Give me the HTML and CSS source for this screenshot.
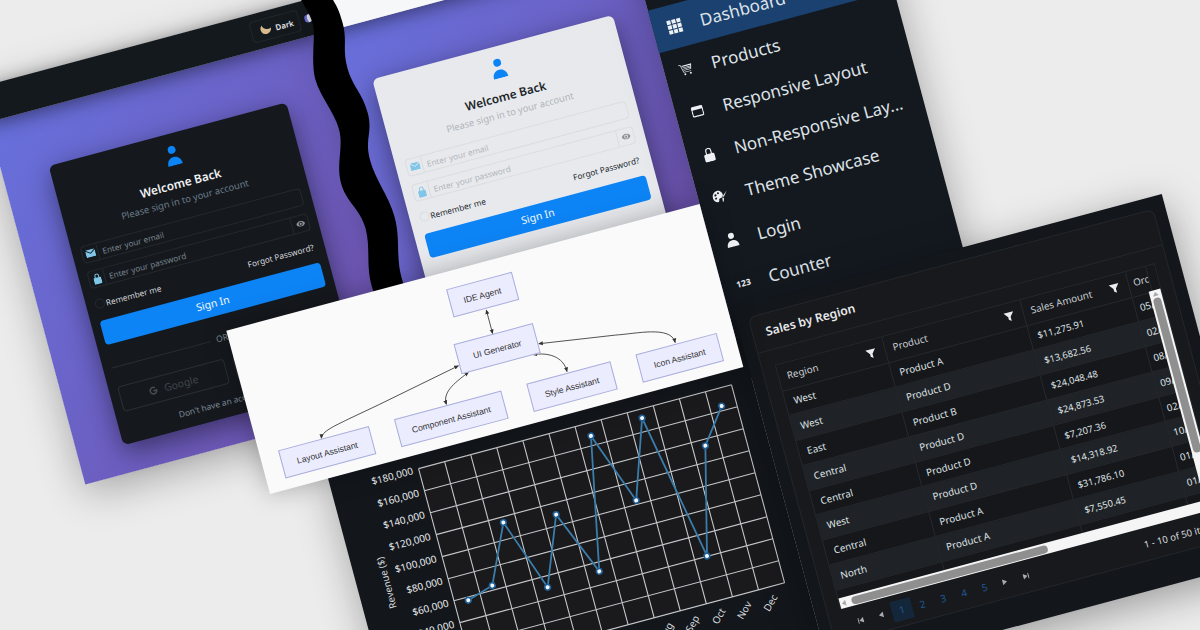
FILE: index.html
```html
<!DOCTYPE html>
<html lang="en">
<head>
    <meta charset="UTF-8">
    <title>UI Generator Collage</title>
    <link rel="stylesheet" href="styles.css">
</head>
<body>
<div class="stage">

    <!-- login, dark half -->
    <section class="win win-dark">
        <header class="win-head">
            <button class="theme-btn">
                <svg class="moon" viewBox="0 0 16 16"><path d="M6 1a7 7 0 1 0 9 9A8 8 0 0 1 6 1z"/></svg>
                <span>Dark</span>
            </button>
            <svg class="mini-logo" viewBox="0 0 10 16"><circle cx="5" cy="8" r="5"/><path class="mini-cut" d="M5 3a5 5 0 0 1 0 10c-2-3-2-7 0-10z"/></svg>
        </header>
        <main class="win-main">
            <form class="login">
                <svg class="login-icon" viewBox="0 0 16 20"><circle cx="8" cy="4.2" r="3.9"/><path d="M.6 20c0-5.500 3.200-8.500 7.400-8.500s7.400 3 7.400 8.500z"/></svg>
                <h2>Welcome Back</h2>
                <p class="sub">Please sign in to your account</p>
                <div class="field">
                    <span class="addon"><svg viewBox="0 0 16 12"><path d="M0 1.500V11a1 1 0 0 0 1 1h14a1 1 0 0 0 1-1V1.500L8 7z"/><path d="M.5 0h15L8 5.500z"/></svg></span>
                    <span class="ph">Enter your email</span>
                </div>
                <div class="field">
                    <span class="addon"><svg class="lock" viewBox="0 0 12 16"><path d="M6 0a3.500 3.500 0 0 0-3.500 3.500V6H1.500A1.500 1.500 0 0 0 0 7.500v7A1.500 1.500 0 0 0 1.500 16h9a1.500 1.500 0 0 0 1.500-1.500v-7A1.500 1.500 0 0 0 10.500 6H9.500V3.500A3.500 3.500 0 0 0 6 0zm0 1.500a2 2 0 0 1 2 2V6H4V3.500a2 2 0 0 1 2-2z"/></svg></span>
                    <span class="ph">Enter your password</span>
                    <span class="eye"><svg viewBox="0 0 16 10"><path d="M8 0C4.500 0 1.500 2.200 0 5c1.500 2.800 4.500 5 8 5s6.500-2.200 8-5c-1.500-2.800-4.500-5-8-5zm0 8.500a3.500 3.500 0 1 1 0-7 3.500 3.500 0 0 1 0 7zM8 3a2 2 0 1 0 0 4 2 2 0 0 0 0-4z"/></svg></span>
                </div>
                <div class="opts">
                    <label><span class="check"></span>Remember me</label>
                    <a>Forgot Password?</a>
                </div>
                <div class="submit">Sign In</div>
                <div class="or"><span>OR</span></div>
                <div class="socials">
                    <div class="social"><svg viewBox="0 0 16 16"><path d="M14.500 7H8.200v2.600h3.600A3.900 3.900 0 1 1 10.600 5l1.800-1.900A6.500 6.500 0 1 0 14.700 8c0-.4 0-.7-.2-1z"/></svg>Google</div>
                    <div class="social"></div>
                </div>
                <p class="foot">Don't have an account? Sign up</p>
            </form>
        </main>
    </section>

    <!-- login, light half -->
    <section class="win win-light">
        <header class="win-head"></header>
        <main class="win-main">
            <form class="login">
                <svg class="login-icon" viewBox="0 0 16 20"><circle cx="8" cy="4.2" r="3.9"/><path d="M.6 20c0-5.500 3.200-8.500 7.400-8.500s7.400 3 7.400 8.500z"/></svg>
                <h2>Welcome Back</h2>
                <p class="sub">Please sign in to your account</p>
                <div class="field">
                    <span class="addon"><svg viewBox="0 0 16 12"><path d="M0 1.500V11a1 1 0 0 0 1 1h14a1 1 0 0 0 1-1V1.500L8 7z"/><path d="M.5 0h15L8 5.500z"/></svg></span>
                    <span class="ph">Enter your email</span>
                </div>
                <div class="field">
                    <span class="addon"><svg class="lock" viewBox="0 0 12 16"><path d="M6 0a3.500 3.500 0 0 0-3.500 3.500V6H1.500A1.500 1.500 0 0 0 0 7.500v7A1.500 1.500 0 0 0 1.500 16h9a1.500 1.500 0 0 0 1.500-1.500v-7A1.500 1.500 0 0 0 10.500 6H9.500V3.500A3.500 3.500 0 0 0 6 0zm0 1.500a2 2 0 0 1 2 2V6H4V3.500a2 2 0 0 1 2-2z"/></svg></span>
                    <span class="ph">Enter your password</span>
                    <span class="eye"><svg viewBox="0 0 16 10"><path d="M8 0C4.500 0 1.500 2.200 0 5c1.500 2.800 4.500 5 8 5s6.500-2.200 8-5c-1.500-2.800-4.500-5-8-5zm0 8.500a3.500 3.500 0 1 1 0-7 3.500 3.500 0 0 1 0 7zM8 3a2 2 0 1 0 0 4 2 2 0 0 0 0-4z"/></svg></span>
                </div>
                <div class="opts">
                    <label><span class="check"></span>Remember me</label>
                    <a>Forgot Password?</a>
                </div>
                <div class="submit">Sign In</div>
            </form>
        </main>
    </section>

    <!-- the torn edge between the two login halves -->
    <svg class="wave" viewBox="270 60 70 430">
        <path d="M291 60 L291 79 C294 90 296 95 296 105 S284 140 284 158 S294 195 294 213 S282 245 282 265 S294 295 294 315 S285 350 285 372 S294 405 294 425 S285 460 285 490 L316 490 C316 470 325 450 325 425 S316 395 316 372 S325 335 325 312 S316 272 316 250 S326 225 326 204 S318 175 318 155 S325 130 325 111 S322 90 320 79 L320 60 Z"/>
    </svg>

    <!-- nav menu -->
    <nav class="sidebar">
        <a class="nav-item active">
            <svg viewBox="0 0 16 16"><path d="M1 1h4v4H1zM6 1h4v4H6zM11 1h4v4h-4zM1 6h4v4H1zM6 6h4v4H6zM11 6h4v4h-4zM1 11h4v4H1zM6 11h4v4H6zM11 11h4v4h-4z"/></svg>
            <span>Dashboard</span>
        </a>
        <a class="nav-item">
            <svg class="ic-thin" viewBox="0 0 16 16"><path d="M0 2h2.500l2.200 9h8.300v.8H4L1.900 2.800H0zM3.500 3.500H15l-1.500 6H5l-.2-.7h8.100l.2-.8H4.600l-.2-.8h8.900l.2-.8H4.200l-.2-.8h9.500l.2-.8H3.700z"/><circle cx="5.500" cy="13.800" r="1.100"/><circle cx="12" cy="13.800" r="1.100"/></svg>
            <span>Products</span>
        </a>
        <a class="nav-item">
            <svg class="ic-small" viewBox="0 0 16 16"><path d="M2 1h12a2 2 0 0 1 2 2v10a2 2 0 0 1-2 2H2a2 2 0 0 1-2-2V3a2 2 0 0 1 2-2zm-.4 4.600V13c0 .2.200.4.400.4h12c.2 0 .4-.2.400-.4V5.600z"/></svg>
            <span>Responsive Layout</span>
        </a>
        <a class="nav-item">
            <svg class="ic-thin" viewBox="0 0 16 16"><path d="M8 0a3.500 3.500 0 0 0-3.500 3.500V7h-1A1.500 1.500 0 0 0 2 8.500v6A1.500 1.500 0 0 0 3.500 16h9a1.500 1.500 0 0 0 1.500-1.500v-6A1.500 1.500 0 0 0 12.500 7h-1V3.500A3.500 3.500 0 0 0 8 0zm0 1.300a2.200 2.200 0 0 1 2.200 2.200V7H5.800V3.500A2.200 2.200 0 0 1 8 1.300z"/></svg>
            <span>Non-Responsive Lay...</span>
        </a>
        <a class="nav-item">
            <svg viewBox="0 0 16 16"><path d="M6.500 1C3 1 .3 3.600.3 7c0 3 2.500 5.500 4.500 5.200 1.400-.2.900-1.600 1.300-2.500.5-1 1.800-.6 2.900-1.100 2-1 2.300-3 1.200-4.900C9.300 2 8 1 6.500 1zM3.500 6a1.100 1.100 0 1 1 0-2.200 1.100 1.100 0 0 1 0 2.200zm3-1.600a1 1 0 1 1 0-2 1 1 0 0 1 0 2zm-3.200 4.800a1 1 0 1 1 0-2 1 1 0 0 1 0 2zM15.500 3l-4.200 5.500-1.100-.8zM9.700 8.500l1.300 1c-.1 1.500-.8 3.300-2 4 .3-1 0-1.800.3-3z"/></svg>
            <span>Theme Showcase</span>
        </a>
        <a class="nav-item">
            <svg viewBox="0 0 16 16"><circle cx="8" cy="4" r="3"/><path d="M2 15c0-4 2.500-6.500 6-6.500s6 2.500 6 6.500z"/></svg>
            <span>Login</span>
        </a>
        <a class="nav-item">
            <b class="num-icon">123</b>
            <span>Counter</span>
        </a>
    </nav>

    <!-- revenue chart -->
    <section class="chart-win">
        <svg class="chart" viewBox="0 0 435 300">
            <rect class="plot" x="90" y="41" width="324" height="205"/>
            <path class="grid-lines" d="M90 41h324M90 63.800h324M90 86.600h324M90 109.300h324M90 132.100h324M90 154.900h324M90 177.700h324M90 200.400h324M90 223.200h324M90 246h324M90 41v205M117 41v205M144 41v205M171 41v205M198 41v205M225 41v205M252 41v205M279 41v205M306 41v205M333 41v205M360 41v205M387 41v205M414 41v205"/>
            <polyline class="line" points="104,181 131,173 158,115 184,189 211,121 238,187 265,54 292,128 319,50 346,200 373,93 399,59"/>
            <g class="dots">
                <circle cx="104" cy="181" r="2.800"/><circle cx="131" cy="173" r="2.800"/><circle cx="158" cy="115" r="2.800"/><circle cx="184" cy="189" r="2.800"/><circle cx="211" cy="121" r="2.800"/><circle cx="238" cy="187" r="2.800"/><circle cx="265" cy="54" r="2.800"/><circle cx="292" cy="128" r="2.800"/><circle cx="319" cy="50" r="2.800"/><circle cx="346" cy="200" r="2.800"/><circle cx="373" cy="93" r="2.800"/><circle cx="399" cy="59" r="2.800"/>
            </g>
            <g class="y-labels">
                <text x="84" y="45">$180,000</text><text x="84" y="68">$160,000</text><text x="84" y="90.500">$140,000</text><text x="84" y="113">$120,000</text><text x="84" y="136">$100,000</text><text x="84" y="159">$80,000</text><text x="84" y="182">$60,000</text><text x="84" y="204">$40,000</text>
            </g>
            <text class="y-title" transform="translate(33 143) rotate(-90)">Revenue ($)</text>
            <g class="x-labels">
                <text transform="translate(296 258) rotate(-45)">Aug</text><text transform="translate(323 258) rotate(-45)">Sep</text><text transform="translate(350 258) rotate(-45)">Oct</text><text transform="translate(377 258) rotate(-45)">Nov</text><text transform="translate(404 258) rotate(-45)">Dec</text>
            </g>
        </svg>
    </section>

    <!-- sales data grid -->
    <section class="table-win">
        <div class="card">
            <h3 class="card-title">Sales by Region</h3>
            <div class="grid">
                <div class="grid-body">
                    <table>
                        <colgroup><col class="c-region"><col class="c-product"><col class="c-sales"><col class="c-order"><col class="c-fill"></colgroup>
                        <thead>
                            <tr>
                                <th><div class="th-in">Region<svg viewBox="0 0 12 12"><path d="M0 1h12L7.500 6.500V12L4.500 9.500v-3z"/></svg></div></th>
                                <th><div class="th-in">Product<svg viewBox="0 0 12 12"><path d="M0 1h12L7.500 6.500V12L4.500 9.500v-3z"/></svg></div></th>
                                <th><div class="th-in">Sales Amount<svg viewBox="0 0 12 12"><path d="M0 1h12L7.500 6.500V12L4.500 9.500v-3z"/></svg></div></th>
                                <th class="th-order">Orc</th>
                                <th></th>
                            </tr>
                        </thead>
                        <tbody>
                            <tr><td>West</td><td>Product A</td><td>$11,275.91</td><td colspan="2">05/</td></tr>
                            <tr><td>West</td><td>Product D</td><td>$13,682.56</td><td colspan="2">02/</td></tr>
                            <tr><td>East</td><td>Product B</td><td>$24,048.48</td><td colspan="2">08/</td></tr>
                            <tr><td>Central</td><td>Product D</td><td>$24,873.53</td><td colspan="2">09/</td></tr>
                            <tr><td>Central</td><td>Product D</td><td>$7,207.36</td><td colspan="2">02/</td></tr>
                            <tr><td>West</td><td>Product D</td><td>$14,318.92</td><td colspan="2">10/</td></tr>
                            <tr><td>Central</td><td>Product A</td><td>$31,786.10</td><td colspan="2">01/</td></tr>
                            <tr><td>North</td><td>Product A</td><td>$7,550.45</td><td colspan="2">01/</td></tr>
                            <tr><td></td><td></td><td></td><td colspan="2"></td></tr>
                        </tbody>
                    </table>
                </div>
                <div class="vbar"><i class="arrow-up"></i><i class="vthumb"></i></div>
                <div class="hbar"><i class="arrow-left"></i><i class="hthumb"></i></div>
            </div>
            <div class="pager">
                <a><svg viewBox="0 0 8 8"><path d="M0 0h1.500v8H0zM8 0v8L2 4z"/></svg></a>
                <a><svg viewBox="0 0 8 8"><path d="M7 0v8L1 4z"/></svg></a>
                <a class="page on">1</a>
                <a class="page">2</a>
                <a class="page">3</a>
                <a class="page">4</a>
                <a class="page">5</a>
                <a><svg viewBox="0 0 8 8"><path d="M1 0v8l6-4z"/></svg></a>
                <a><svg viewBox="0 0 8 8"><path d="M0 0v8l6-4zM6.500 0H8v8H6.500z"/></svg></a>
                <span class="pager-info">1 - 10 of 50 items</span>
            </div>
        </div>
    </section>

    <!-- agent diagram -->
    <section class="diagram">
        <svg class="edges" viewBox="0 0 490 169">
            <defs>
                <marker id="tip" markerWidth="6" markerHeight="6" refX="5" refY="3" orient="auto-start-reverse"><path d="M0 0.500L6 3L0 5.500z"/></marker>
            </defs>
            <path d="M256.500 47.500L256.500 71.500"/>
            <path d="M215 94L128 111L95 117C80 120 66 122 64 128.500"/>
            <path d="M223 103C205 110 193 116 193.500 128"/>
            <path d="M290 102.500C305 104 319 112 318.500 127.500"/>
            <path d="M298.500 93.500L375 105C395 109 431 110 430.500 127.500"/>
        </svg>
        <div class="node n-ide">IDE Agent</div>
        <div class="node n-ui">UI Generator</div>
        <div class="node n-layout">Layout Assistant</div>
        <div class="node n-comp">Component Assistant</div>
        <div class="node n-style">Style Assistant</div>
        <div class="node n-icon">Icon Assistant</div>
    </section>
</div>
</body>
</html>
```

FILE: styles.css
```css
* {
    box-sizing: border-box;
}
html, body {
    margin: 0;
    padding: 0;
    width: 1200px;
    height: 630px;
    overflow: hidden;
    background: #ececed;
    font-family: "Noto Sans", "Open Sans", sans-serif;
}
.stage {
    position: absolute;
    left: 0;
    top: 0;
    width: 0;
    height: 0;
    transform: rotate(-15deg);
    transform-origin: 0 0;
}

/* login windows */
.win {
    position: absolute;
    top: 79px;
    height: 411px;
    display: flex;
    flex-direction: column;
    box-shadow: 0 10px 40px rgba(0, 0, 0, .3);
}
.win-dark {
    left: -43px;
    width: 340px;
    --head: #14191e;
    --card: #15191e;
    --title: #eef0f2;
    --sub: #6c7b89;
    --line: #24292e;
    --ph: #79848f;
    --label: #d5d8dc;
}
.win-light {
    left: 304px;
    width: 319px;
    --head: #f6f7f9;
    --card: #e7e9ed;
    --title: #212529;
    --sub: #b1b4b9;
    --line: #dcdde0;
    --ph: #b2b5ba;
    --label: #212529;
}
.win-head {
    height: 36px;
    flex: none;
    display: flex;
    align-items: center;
    justify-content: flex-end;
    background: var(--head);
    box-shadow: 0 4px 18px rgba(0, 0, 0, .45);
    position: relative;
}
.theme-btn {
    width: 50px;
    height: 22px;
    margin-right: 5px;
    display: flex;
    align-items: center;
    gap: 4px;
    padding: 0 0 0 8px;
    border: 1px solid #22272c;
    border-radius: 4px;
    background: transparent;
    color: #e4e6e9;
    font: 600 8px "Noto Sans", sans-serif;
}
.moon {
    width: 12px;
    height: 12px;
    flex: none;
    fill: #d9ba8d;
    transform: rotate(-20deg);
}
.mini-logo {
    width: 8px;
    height: 13px;
    flex: none;
    fill: #6b6fd8;
}
.mini-cut {
    fill: #e8e8f0;
}
.win-main {
    flex: 1;
    padding-top: 58px;
    background: linear-gradient(135deg, #6770dc 0%, #7050aa 100%);
}
.login {
    width: 246px;
    height: 289px;
    margin: 0 auto;
    padding: 12px 9px 0;
    border-radius: 6px;
    background: var(--card);
    box-shadow: 0 8px 26px rgba(0, 0, 0, .45);
    display: flex;
    flex-direction: column;
}
.win-light .login {
    width: 249px;
    padding: 12px 10px 0;
}
.login-icon {
    width: 16px;
    height: 20px;
    flex: none;
    align-self: center;
    fill: #0d84f5;
}
.login h2 {
    margin: 10px 0 0;
    height: 16px;
    line-height: 16px;
    text-align: center;
    font-size: 11.8px;
    font-weight: 600;
    color: var(--title);
}
.sub {
    margin: 3px 0 11px;
    height: 14px;
    line-height: 14px;
    text-align: center;
    font-size: 9.4px;
    color: var(--sub);
}
.field {
    height: 18px;
    flex: none;
    margin-bottom: 8px;
    display: flex;
    align-items: center;
    border: 1px solid var(--line);
    border-radius: 4px;
    font-size: 8.2px;
}
.addon {
    width: 16px;
    height: 100%;
    flex: none;
    display: flex;
    align-items: center;
    justify-content: center;
    border-right: 1px solid var(--line);
}
.addon svg {
    width: 10px;
    height: 8px;
    fill: #7fc6e8;
}
.addon svg.lock {
    width: 8px;
    height: 11px;
}
.ph {
    flex: 1;
    padding-left: 4px;
    color: var(--ph);
}
.eye {
    width: 17px;
    height: 100%;
    display: flex;
    align-items: center;
    justify-content: center;
    border-left: 1px solid var(--line);
}
.eye svg {
    width: 9px;
    height: 6px;
    fill: #8d9196;
}
.opts {
    height: 14px;
    flex: none;
    margin-top: 1px;
    padding-right: 2px;
    display: flex;
    align-items: center;
    justify-content: space-between;
    font-size: 8.2px;
    color: var(--label);
}
.opts label {
    display: flex;
    align-items: center;
    gap: 1px;
}
.check {
    width: 10px;
    height: 10px;
    border: 1px solid var(--line);
    border-radius: 50%;
}
.submit {
    height: 25px;
    flex: none;
    margin-top: 10px;
    border-radius: 4px;
    background: #0d84f5;
    color: #f4f9ff;
    font-size: 10.5px;
    line-height: 25px;
    text-align: center;
}
.or {
    height: 12px;
    flex: none;
    margin-top: 17px;
    display: flex;
    align-items: center;
    gap: 6px;
    font-size: 8.6px;
    color: #7b8792;
}
.or::before, .or::after {
    content: "";
    flex: 1;
    height: 1px;
    background: #2a2f34;
}
.socials {
    height: 26px;
    flex: none;
    margin-top: 14px;
    display: flex;
    gap: 9px;
}
.social {
    flex: 1;
    display: flex;
    align-items: center;
    justify-content: center;
    gap: 6px;
    border: 1px solid #2a2f34;
    border-radius: 4px;
    color: #3f454b;
    font-size: 10.4px;
}
.social svg {
    width: 10px;
    height: 10px;
    fill: #474c52;
}
.foot {
    margin: 10px 0 0;
    text-align: center;
    font-size: 8.4px;
    line-height: 14px;
    color: #7f8c98;
}
.wave {
    position: absolute;
    left: 270px;
    top: 60px;
    width: 70px;
    height: 430px;
    fill: #000;
}

/* nav menu */
.sidebar {
    position: absolute;
    left: 623px;
    top: 100px;
    width: 243px;
    height: 460px;
    padding-top: 78px;
    background: #141920;
    box-shadow: 0 10px 40px rgba(0, 0, 0, .3);
    display: flex;
    flex-direction: column;
}
.nav-item {
    height: 44.2px;
    flex: none;
    display: flex;
    align-items: center;
    gap: 18px;
    padding-left: 14px;
    font-size: 17px;
    color: #dfe3e8;
    white-space: nowrap;
}
.nav-item svg {
    width: 16px;
    height: 16px;
    flex: none;
    fill: #eef0f3;
}
.nav-item svg.ic-thin {
    width: 14px;
    height: 14px;
    margin: 0 1px;
}
.nav-item svg.ic-small {
    width: 12px;
    height: 12px;
    margin: 0 2px;
}
.nav-item.active {
    background: #1a4170;
}
.num-icon {
    width: 16px;
    flex: none;
    font-size: 8.5px;
    color: #eef0f3;
    text-align: center;
}

/* chart */
.chart-win {
    position: absolute;
    left: 193px;
    top: 520px;
    width: 435px;
    height: 340px;
    background: #13171c;
    box-shadow: 0 10px 40px rgba(0, 0, 0, .3);
}
.chart {
    display: block;
    width: 435px;
    height: 300px;
    font-family: "Noto Sans", sans-serif;
}
.plot {
    fill: #1a1a1d;
}
.grid-lines {
    fill: none;
    stroke: #c4c6c8;
    stroke-width: 1.1;
}
.line {
    fill: none;
    stroke: #3a7dab;
    stroke-width: 1.8;
}
.dots circle {
    fill: #f4f8fb;
    stroke: #1f5f96;
    stroke-width: 1.6;
}
.y-labels text {
    text-anchor: end;
    fill: #e6e8ea;
    font-size: 10px;
}
.y-title {
    text-anchor: middle;
    fill: #d6d9dc;
    font-size: 9.7px;
}
.x-labels text {
    text-anchor: end;
    fill: #d6d9dc;
    font-size: 10px;
}

/* sales grid */
.table-win {
    position: absolute;
    left: 628px;
    top: 488px;
    width: 444px;
    height: 380px;
    padding: 12px;
    background: #13171c;
    box-shadow: 0 10px 40px rgba(0, 0, 0, .35);
}
.card {
    height: 339px;
    display: flex;
    flex-direction: column;
    border: 1px solid #23272c;
    border-radius: 8px;
    background: #18191d;
}
.card-title {
    height: 37px;
    flex: none;
    margin: 0;
    padding-left: 13px;
    line-height: 36px;
    font-size: 12.2px;
    font-weight: 600;
    color: #e6e8ea;
    border-bottom: 1px solid #23272c;
}
.grid {
    position: relative;
    height: 253px;
    flex: none;
    margin: 15px 12px 0 13px;
    display: flex;
    flex-direction: column;
    border: 1px solid #24282d;
    border-bottom: 0;
}
.grid-body {
    flex: 1;
    overflow: hidden;
}
table {
    width: 394px;
    table-layout: fixed;
    border-collapse: collapse;
    font-size: 9.8px;
    color: #dfe2e5;
}
.c-region { width: 109px; }
.c-product { width: 143px; }
.c-sales { width: 109px; }
.c-order { width: 21px; }
.c-fill { width: 12px; }
th, td {
    height: 25.8px;
    padding: 0 0 0 8px;
    border-right: 1px solid #26292e;
    border-bottom: 1px solid #24282d;
    text-align: left;
    white-space: nowrap;
    overflow: hidden;
    font-weight: 400;
}
th {
    height: 26px;
    color: #c9cdd1;
    background: #16181c;
}
td:nth-child(3) {
    font-size: 9.4px;
}
td:nth-child(4), .th-order {
    padding-left: 5px;
}
.th-in {
    display: flex;
    align-items: center;
    justify-content: space-between;
    padding-right: 9px;
}
.th-in svg {
    width: 10px;
    height: 10px;
    fill: #e9ebed;
}
tbody tr {
    background: #15171b;
}
tbody tr:nth-child(even) {
    background: #1f2327;
}
.vbar {
    position: absolute;
    right: 0;
    top: 25px;
    bottom: 11px;
    width: 12px;
    padding: 2px 2px 0;
    background: #f5f5f5;
    display: flex;
    flex-direction: column;
    align-items: center;
    gap: 2px;
}
.vthumb {
    width: 8px;
    height: 160px;
    border-radius: 4px;
    background: #8f8f8f;
}
.arrow-up {
    width: 0;
    height: 0;
    border: 3px solid transparent;
    border-top: 0;
    border-bottom: 4px solid #a9a9a9;
}
.hbar {
    height: 11px;
    flex: none;
    position: relative;
    padding: 2px;
    background: #f5f5f5;
    display: flex;
    align-items: center;
    gap: 6px;
}
.hthumb {
    width: 203px;
    height: 8px;
    border-radius: 4px;
    background: #8f8f8f;
}
.arrow-left {
    width: 0;
    height: 0;
    border: 3px solid transparent;
    border-left: 0;
    border-right: 4px solid #a9a9a9;
}
.pager {
    flex: 1;
    display: flex;
    align-items: center;
    padding-left: 19px;
    font-size: 10px;
}
.pager a {
    width: 21.4px;
    height: 21px;
    display: flex;
    align-items: center;
    justify-content: center;
}
.pager svg {
    width: 6px;
    height: 6px;
    fill: #a6aaae;
}
.page {
    color: #1f5a96;
}
.page.on {
    background: #14263a;
}
.pager-info {
    margin-left: auto;
    padding-right: 18px;
    font-size: 9.6px;
    color: #d6d9dc;
    white-space: nowrap;
}

/* mermaid style diagram */
.diagram {
    position: absolute;
    left: 133px;
    top: 378px;
    width: 490px;
    height: 169px;
    background: #fafafb;
    box-shadow: 0 0 26px rgba(0, 0, 0, .28);
}
.edges {
    position: absolute;
    inset: 0;
    width: 100%;
    height: 100%;
    fill: none;
    stroke: #3a3a3a;
    stroke-width: .8;
}
.edges path {
    marker-start: url(#tip);
    marker-end: url(#tip);
}
.edges marker path {
    fill: #333;
    stroke: none;
}
.node {
    position: absolute;
    display: flex;
    align-items: center;
    justify-content: center;
    top: 129px;
    height: 29px;
    background: #ececff;
    border: 1px solid #a9aedb;
    font-family: "Liberation Sans", sans-serif;
    font-size: 8.6px;
    color: #333;
    white-space: nowrap;
}
.n-ide { left: 222.5px; top: 17px; width: 68px; }
.n-ui { left: 216px; top: 72px; width: 82px; height: 31px; }
.n-layout { left: 19px; width: 94px; }
.n-comp { left: 138.5px; width: 111.5px; }
.n-style { left: 275.5px; width: 87.5px; }
.n-icon { left: 389px; width: 83.5px; }
```
